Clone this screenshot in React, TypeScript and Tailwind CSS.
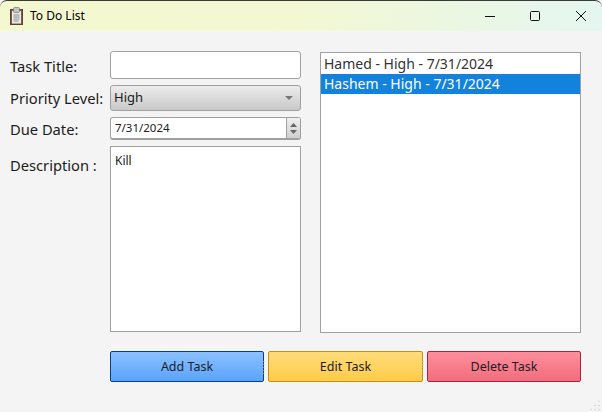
const Grip = () => (
  <svg width="4" height="16" viewBox="0 0 4 16" className="absolute right-[-3.5px] top-[8px]">
    <path d="M1 1v14" stroke="#d0d0d0" strokeWidth="1" strokeDasharray="1 2" />
  </svg>
);

export default function App() {
  const font = { fontFamily: '"Noto Sans", "Open Sans", sans-serif' };
  return (
    <div style={font} className="relative w-[602px] h-[412px] bg-[#f4f4f4] flex flex-col overflow-hidden text-[#1b1b1b]">
      <div className="h-[31px] shrink-0 border-t border-[#3a3a3a] rounded-t-[7px] bg-gradient-to-r from-[#f4f8cf] via-[#f3f8d3] to-[#e4f6f0] flex items-center">
        <svg width="13" height="18" viewBox="0 0 13 18" className="ml-[10px] mt-[-1px] mr-[7px]">
          <rect x="0.5" y="2.5" width="12" height="15" fill="#7a5c4c" stroke="#5a4436" />
          <rect x="2" y="4" width="9" height="12.5" fill="#ecebe8" />
          <rect x="3.5" y="0.5" width="6" height="5" rx="1" fill="#c4c4c4" stroke="#777" strokeWidth="0.7" />
          <path d="M3.5 8h6M3.5 10h6M3.5 12h6M3.5 14h5" stroke="#8b8b8b" strokeWidth="1" />
        </svg>
        <span className="text-[12px] text-black leading-none">To Do List</span>
        <div className="ml-auto mr-[-2px] flex items-center shrink-0">
          <svg width="46" height="30" viewBox="0 0 46 30" className="shrink-0"><path d="M18 15.5h10" stroke="#111" /></svg>
          <svg width="46" height="30" viewBox="0 0 46 30" className="shrink-0 ml-[-1px]"><rect x="18.5" y="10.5" width="9" height="9" rx="1" fill="none" stroke="#111" /></svg>
          <svg width="46" height="30" viewBox="0 0 46 30" className="shrink-0"><path d="M18 10l10 10M28 10L18 20" stroke="#111" /></svg>
        </div>
      </div>

      <div className="flex-1 flex flex-col pl-[10px] pr-[21px] pt-[20px]">
        <div className="flex h-[282px]">
          <div className="w-[100px] shrink-0 text-[14.7px] leading-[20px] flex flex-col whitespace-nowrap">
            <div className="h-[30px] flex items-center">Task Title:</div>
            <div className="h-[33px] flex items-center">Priority Level:</div>
            <div className="h-[30px] flex items-center">Due Date:</div>
            <div className="h-[42px] flex items-center">Description :</div>
          </div>
          <div className="w-[191px] shrink-0 flex flex-col">
            <div className="h-[28px] bg-white border border-[#a0a0a0] rounded-[3px]" />
            <div className="mt-[6px] h-[26px] border border-[#a0a0a0] rounded-[3px] bg-gradient-to-b from-[#ececec] to-[#c9c9c9] flex items-center pl-[3px] pr-[7px] text-[13px] text-[#1a1a1a]">
              High
              <svg width="8" height="4" viewBox="0 0 8 4" className="ml-auto"><path d="M0 0h8L4 4z" fill="#777" /></svg>
            </div>
            <div className="mt-[6px] h-[23px] border border-[#a0a0a0] border-b-2 rounded-[3px] bg-white flex items-center text-[11.5px] pl-[4px] text-[#222]">
              7/31/2024
              <div className="ml-auto h-full w-[14px] border-l border-[#a0a0a0] bg-gradient-to-b from-[#f0f0f0] to-[#cfcfcf] flex flex-col items-center justify-center gap-[3px]">
                <svg width="7" height="4" viewBox="0 0 7 4"><path d="M3.5 0L7 4H0z" fill="#666" /></svg>
                <svg width="7" height="4" viewBox="0 0 7 4"><path d="M0 0h7L3.5 4z" fill="#666" /></svg>
              </div>
            </div>
            <div className="mt-[6px] h-[186px] bg-white border border-[#a0a0a0] px-[4px] pt-[5px] text-[12px] leading-[17px] text-[#222]">Kill</div>
          </div>
          <div className="ml-[19px] flex-1 mt-[1px] h-[281px] bg-white border border-[#a0a0a0] text-[14px] leading-[20px] text-[#333]">
            <div className="h-[21px] pl-[3px] flex items-center">Hamed - High - 7/31/2024</div>
            <div className="h-[20px] pl-[3px] flex items-center bg-[#1382dc] text-white">Hashem - High - 7/31/2024</div>
          </div>
        </div>
        <div className="mt-[18px] ml-[100px] flex gap-[4px] h-[31px] text-[12.5px] text-[#1c1c2a]">
          <button className="relative w-[154px] pt-[2px] border border-[#0b3f7f] rounded-[2px] bg-gradient-to-b from-[#8cc0ff] to-[#58a4fb]">Add Task<Grip /></button>
          <button className="relative w-[155px] pt-[2px] border border-[#c09018] rounded-[2px] bg-gradient-to-b from-[#ffdc78] to-[#fdcb47]">Edit Task<Grip /></button>
          <button className="w-[154px] pt-[2px] border border-[#a4283c] rounded-[2px] bg-gradient-to-b from-[#fd8e9c] to-[#f26c7c]">Delete Task</button>
        </div>
      </div>
      <svg width="12" height="12" viewBox="0 0 12 12" className="absolute right-[1px] bottom-[1px]">
        <path d="M10 2v1M10 6v1M6 6v1M10 10v1M6 10v1M2 10v1" stroke="#bdbdbd" />
      </svg>
    </div>
  );
}
